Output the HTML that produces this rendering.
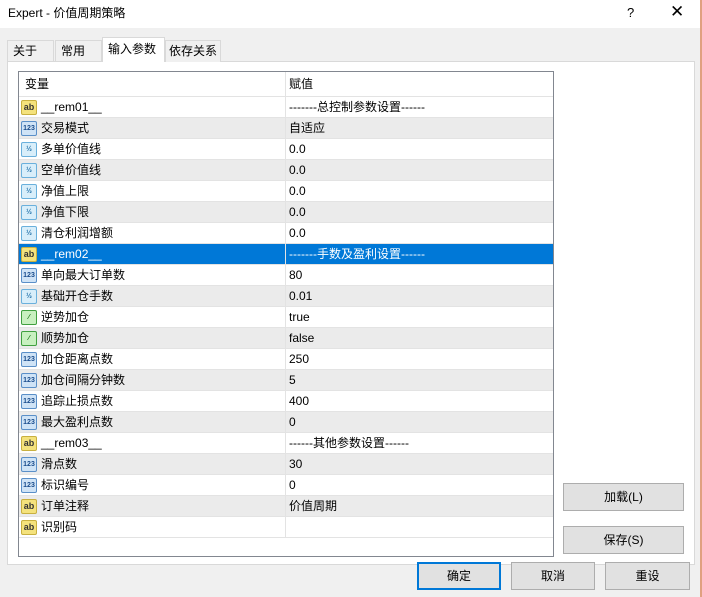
<!DOCTYPE html><html><head><meta charset="utf-8"><style>
*{box-sizing:border-box;margin:0;padding:0}
body{width:702px;height:597px;background:#f0f0f0;font-family:"Liberation Sans","Noto Sans CJK SC",sans-serif;font-size:12px;color:#000;position:relative;overflow:hidden}
.title{position:absolute;left:0;top:0;width:702px;height:28px;background:#fff}
.title span{position:absolute;left:8px;top:0;line-height:26px;font-size:12px}
.q{position:absolute;left:627px;top:5px;font-size:13px}
.x{position:absolute;left:670px;top:2px;font-size:17px}
.rb{position:absolute;right:0;top:0;width:2px;height:597px;background:#e0a080}
.tab{position:absolute;top:40px;height:22px;line-height:20px;border:1px solid #d9d9d9;border-bottom:none;background:#f0f0f0;padding-left:5px}
.tab.sel{background:#fff;top:37px;height:25px;line-height:22px;border-color:#d9d9d9}
.panel{position:absolute;left:7px;top:61px;width:688px;height:504px;background:#fff;border:1px solid #d9d9d9}
.tbl{position:absolute;left:18px;top:71px;width:536px;height:486px;border:1px solid #828790;background:#fff;overflow:hidden}
.row{position:absolute;left:0;width:534px;height:21px;border-bottom:1px solid #e3e3e3}
.row.g{background:#ebebeb}
.row.s{background:#0078d7;color:#fff}
.n{position:absolute;left:22px;top:0;line-height:20px;white-space:nowrap}
.v{position:absolute;left:270px;top:0;line-height:20px;white-space:nowrap}
.div{position:absolute;left:266px;top:0;width:1px;height:466px;background:#e3e3e3}
.ic{position:absolute;left:2px;top:3px;width:16px;height:15px;font-size:7px;line-height:13px;text-align:center;border-radius:2px;font-weight:bold}
.ab{background:#f4e27c;border:1px solid #c8b040;color:#333;font-size:9px}
.n3{background:#cfe3f6;border:1px solid #5a8fc8;color:#1a4c8c}
.hf{background:#d8eefa;border:1px solid #6ab0dc;color:#2070a8}
.gr{background:#c8f0c0;border:1px solid #40a040;color:#107010}
.btn{position:absolute;height:28px;background:#e1e1e1;border:1px solid #adadad;text-align:center;line-height:26px}
</style></head><body>
<div class="title"><span>Expert - 价值周期策略</span><div class="q">?</div><div class="x">✕</div></div>
<div class="rb"></div>
<div class="tab" style="left:7px;width:47px">关于</div>
<div class="tab" style="left:55px;width:47px">常用</div>
<div class="panel"></div>
<div class="tab sel" style="left:102px;width:63px">输入参数</div>
<div class="tab" style="left:165px;width:56px;padding-left:3px">依存关系</div>
<div class="tbl">
<div class="row" style="top:0;height:25px"><span class="n" style="left:6px;line-height:25px">变量</span><span class="v" style="line-height:25px">赋值</span></div>
<div id="rows"></div>
<div class="div"></div>
</div>
<div class="btn" style="left:563px;top:483px;width:121px">加载(L)</div>
<div class="btn" style="left:563px;top:526px;width:121px">保存(S)</div>
<div class="btn" style="left:417px;top:562px;width:84px;border:2px solid #0078d7;line-height:24px">确定</div>
<div class="btn" style="left:511px;top:562px;width:84px">取消</div>
<div class="btn" style="left:605px;top:562px;width:85px">重设</div>
<script>
var d=[["ab","__rem01__","-------总控制参数设置------"],["n3","交易模式","自适应"],["hf","多单价值线","0.0"],["hf","空单价值线","0.0"],["hf","净值上限","0.0"],["hf","净值下限","0.0"],["hf","清仓利润增额","0.0"],["ab","__rem02__","-------手数及盈利设置------"],["n3","单向最大订单数","80"],["hf","基础开仓手数","0.01"],["gr","逆势加仓","true"],["gr","顺势加仓","false"],["n3","加仓距离点数","250"],["n3","加仓间隔分钟数","5"],["n3","追踪止损点数","400"],["n3","最大盈利点数","0"],["ab","__rem03__","------其他参数设置------"],["n3","滑点数","30"],["n3","标识编号","0"],["ab","订单注释","价值周期"],["ab","识别码",""]];
var t={ab:"ab",n3:"123",hf:"½",gr:"⁄"},h="";
d.forEach(function(r,i){var c=i==7?"s":(i%2?"g":"");
h+='<div class="row '+c+'" style="top:'+(25+i*21)+'px"><span class="ic '+r[0]+'">'+t[r[0]]+'</span><span class="n">'+r[1]+'</span><span class="v">'+r[2]+'</span></div>';});
document.getElementById("rows").innerHTML=h;
</script>
</body></html>
